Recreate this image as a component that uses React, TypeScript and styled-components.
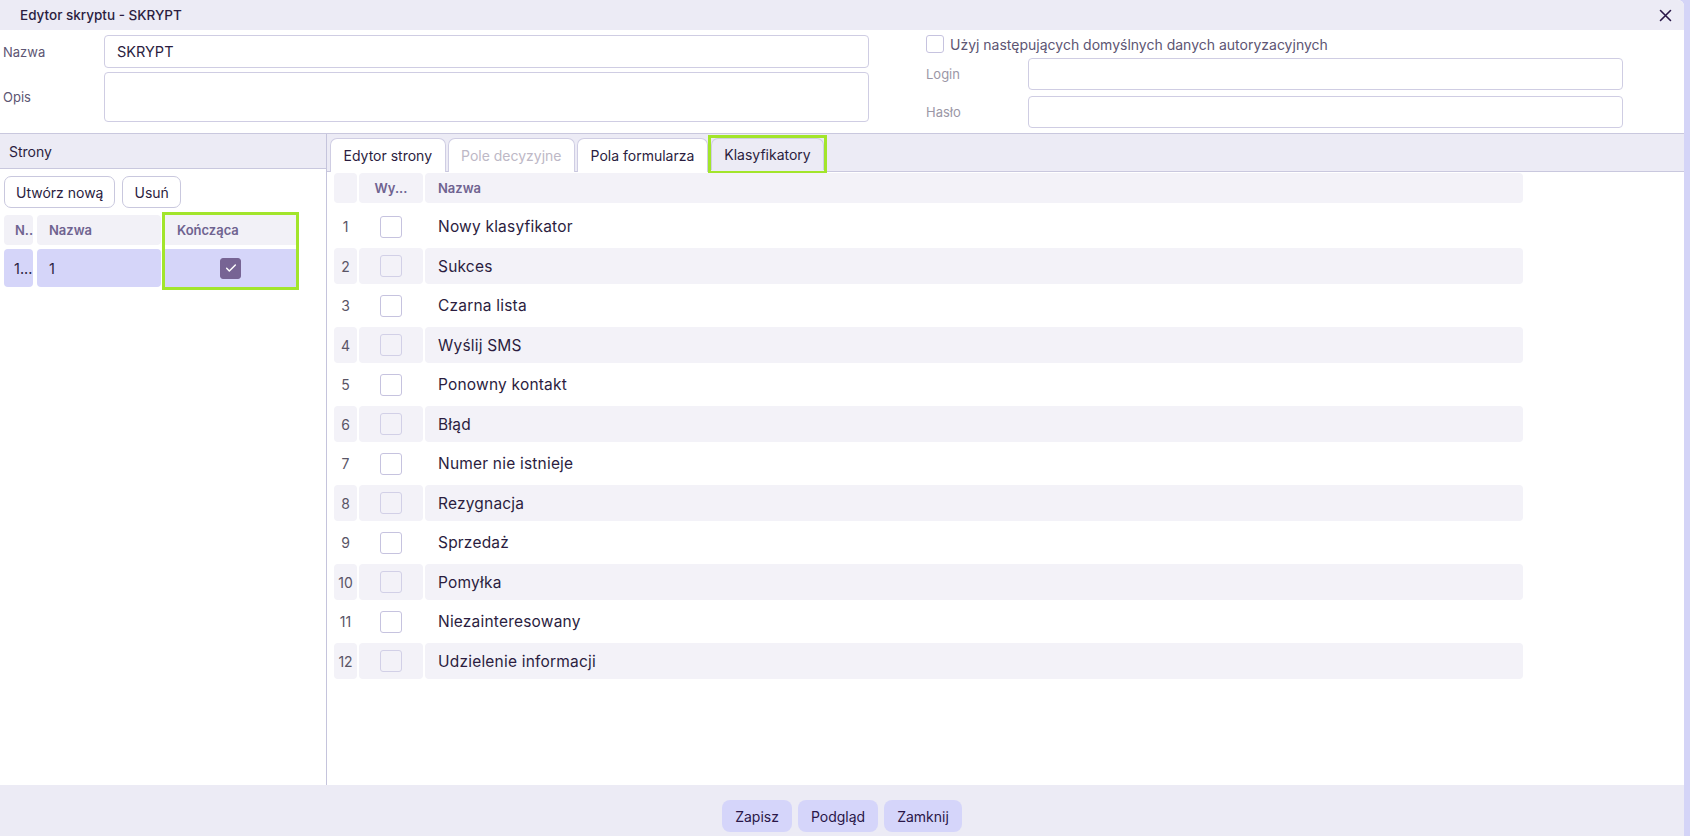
import React from 'react';
import styled, { createGlobalStyle } from 'styled-components';

const GlobalStyle = createGlobalStyle`
  html, body {
    margin: 0;
    padding: 0;
    height: 100%;
  }
  body {
    font-family: Inter, "Noto Sans", sans-serif;
    color: #2b1d40;
    background: #d4d4f7;
  }
  #root {
    height: 100%;
  }
  * {
    box-sizing: border-box;
  }
`;

const Page = styled.div`
  height: 100vh;
  display: flex;
  padding-right: 6px;
  background: #d4d4f7;
`;

const Window = styled.div`
  flex: 1;
  display: flex;
  flex-direction: column;
  min-width: 0;
  background: #fff;
  border-top-right-radius: 6px;
  overflow: hidden;
`;

const TitleBar = styled.div`
  flex: none;
  height: 30px;
  display: flex;
  align-items: center;
  justify-content: space-between;
  padding: 0 12px 0 20px;
  background: #ecebf5;
`;

const Title = styled.span`
  font-size: 13.5px;
  font-weight: 500;
  color: #2b1d40;
`;

const CloseButton = styled.button`
  width: 14px;
  height: 14px;
  padding: 0;
  border: none;
  background: transparent;
  color: #2a1748;
  display: flex;
  align-items: center;
  justify-content: center;
  cursor: pointer;
`;

const TopForm = styled.div`
  flex: none;
  height: 104px;
  display: flex;
  padding: 5px 0 0 3px;
  border-bottom: 1px solid #c9c8de;
`;

const FieldGrid = styled.div<{ $label: number; $input: number; $gap: number }>`
  display: grid;
  grid-template-columns: ${(p) => p.$label}px ${(p) => p.$input}px;
  row-gap: ${(p) => p.$gap}px;
  align-items: center;
  align-content: start;
`;

const FieldLabel = styled.label<{ $muted?: boolean }>`
  font-size: 13px;
  color: ${(p) => (p.$muted ? '#9b97a6' : '#5d5573')};
`;

const TextBox = styled.input<{ $height: number }>`
  height: ${(p) => p.$height}px;
  width: 100%;
  padding: 0 12px;
  border: 1px solid #cfcde3;
  border-radius: 4px;
  font: inherit;
  font-size: 14.5px;
  color: #2b1d40;
  background: #fff;
  outline: none;
`;

const TextArea = styled.textarea`
  height: 50px;
  width: 100%;
  padding: 8px 12px;
  border: 1px solid #cfcde3;
  border-radius: 4px;
  font: inherit;
  resize: none;
  outline: none;
`;

const AuthBlock = styled.div`
  margin-left: 57px;
  display: flex;
  flex-direction: column;
  gap: 5px;
`;

const CheckRow = styled.div`
  display: flex;
  align-items: center;
  gap: 6px;
  font-size: 14px;
  color: #5d5573;
`;

const Box = styled.span<{ $checked?: boolean; $muted?: boolean; $size: number }>`
  flex: none;
  width: ${(p) => p.$size}px;
  height: ${(p) => p.$size}px;
  display: inline-flex;
  align-items: center;
  justify-content: center;
  border-radius: 3px;
  border: 1px solid ${(p) => (p.$checked ? '#776494' : p.$muted ? '#d2d0e7' : '#c6c3df')};
  background: ${(p) => (p.$checked ? '#776494' : p.$muted ? 'transparent' : '#fff')};
  color: #fff;
`;

const Body = styled.div`
  flex: 1;
  min-height: 0;
  display: flex;
`;

const PagesPanel = styled.div`
  flex: none;
  width: 327px;
  border-right: 1px solid #c5c4dc;
  display: flex;
  flex-direction: column;
`;

const PanelHeader = styled.div`
  height: 35px;
  display: flex;
  align-items: center;
  padding-left: 9px;
  font-size: 14px;
  background: #ecebf5;
  border-bottom: 1px solid #c9c8de;
`;

const ButtonRow = styled.div`
  display: flex;
  gap: 7px;
  padding: 7px 0 0 4px;
`;

const OutlineButton = styled.button`
  height: 32px;
  padding: 0 11px;
  border: 1px solid #c9c8de;
  border-radius: 7px;
  background: #fff;
  font: inherit;
  font-size: 14px;
  color: #2b1d40;
`;

const PagesTable = styled.div`
  display: flex;
  gap: 4px;
  padding: 7px 0 0 4px;
`;

const PageColumn = styled.div<{ $width: number; $highlight?: boolean }>`
  width: ${(p) => p.$width}px;
  display: flex;
  flex-direction: column;
  gap: 4px;
  outline: ${(p) => (p.$highlight ? '3.5px solid #a2e52b' : 'none')};
`;

const HeadCell = styled.div<{ $square?: boolean; $center?: boolean; $pad?: number }>`
  height: 30px;
  display: flex;
  align-items: center;
  justify-content: ${(p) => (p.$center ? 'center' : 'flex-start')};
  padding: 0 0 0 ${(p) => (p.$center ? 0 : p.$pad ?? 12)}px;
  border-radius: ${(p) => (p.$square ? 0 : 4)}px;
  background: #f2f1f7;
  font-size: 13px;
  font-weight: 600;
  color: #6f6390;
  white-space: nowrap;
  overflow: hidden;
`;

const PageCell = styled.div<{ $square?: boolean; $center?: boolean; $pad?: number }>`
  height: 38px;
  display: flex;
  align-items: center;
  justify-content: ${(p) => (p.$center ? 'center' : 'flex-start')};
  padding: 0 0 0 ${(p) => (p.$center ? 0 : p.$pad ?? 12)}px;
  border-radius: ${(p) => (p.$square ? 0 : 4)}px;
  background: #d5d5f9;
  font-size: 14.5px;
  white-space: nowrap;
  overflow: hidden;
`;

const EditorPanel = styled.div`
  flex: 1;
  min-width: 0;
  display: flex;
  flex-direction: column;
`;

const TabBar = styled.div`
  flex: none;
  height: 38px;
  display: flex;
  align-items: flex-end;
  gap: 2px;
  padding-left: 3px;
  background: #ecebf5;
  border-bottom: 1px solid #c9c8de;
`;

const Tab = styled.div<{ $disabled?: boolean; $active?: boolean }>`
  height: ${(p) => (p.$active ? 32 : 34)}px;
  margin-bottom: ${(p) => (p.$active ? 1 : -1)}px;
  display: flex;
  align-items: center;
  padding: 0 12.5px;
  border: 1px solid #cfcde3;
  border-bottom: none;
  border-radius: 7px 7px 0 0;
  background: ${(p) => (p.$active ? '#ecebf5' : '#fff')};
  font-size: 14px;
  color: ${(p) => (p.$disabled ? '#bdb8c6' : '#2b1d40')};
  white-space: nowrap;
`;

const Highlight = styled.div`
  margin-left: 1px;
  display: flex;
  outline: 3.5px solid #a2e52b;
`;

const Rows = styled.div`
  display: flex;
  flex-direction: column;
  gap: 3.5px;
  padding: 1px 0 0 7px;
`;

const GridRow = styled.div<{ $head?: boolean }>`
  display: grid;
  grid-template-columns: 23px 64px 1098px;
  column-gap: 2px;
  height: ${(p) => (p.$head ? 30 : 36)}px;
  margin-bottom: ${(p) => (p.$head ? 2 : 0)}px;
`;

const Cell = styled.div<{ $shaded?: boolean; $align: 'center' | 'left'; $head?: boolean }>`
  display: flex;
  align-items: center;
  justify-content: ${(p) => (p.$align === 'center' ? 'center' : 'flex-start')};
  padding-left: ${(p) => (p.$align === 'left' ? 13 : 0)}px;
  border-radius: 4px;
  background: ${(p) => (p.$shaded ? '#f3f2f8' : 'transparent')};
  font-size: ${(p) => (p.$head ? 13 : 15.5)}px;
  font-weight: ${(p) => (p.$head ? 600 : 400)};
  letter-spacing: ${(p) => (p.$head ? 0 : 0.2)}px;
  color: ${(p) => (p.$head ? '#6f6390' : '#2b1d40')};
  white-space: nowrap;
`;

const RowNumber = styled(Cell)`
  font-size: 14px;
  letter-spacing: 0;
  color: #5a5566;
`;

const Footer = styled.div`
  flex: none;
  height: 51px;
  display: flex;
  justify-content: center;
  align-items: flex-start;
  gap: 6px;
  padding-top: 15px;
  background: #ecebf5;
`;

const FooterButton = styled.button`
  height: 32px;
  padding: 0 13px;
  border: none;
  border-radius: 8px;
  background: #d5d5fa;
  font: inherit;
  font-size: 14px;
  color: #2a1748;
`;

const classifiers = [
  'Nowy klasyfikator',
  'Sukces',
  'Czarna lista',
  'Wyślij SMS',
  'Ponowny kontakt',
  'Błąd',
  'Numer nie istnieje',
  'Rezygnacja',
  'Sprzedaż',
  'Pomyłka',
  'Niezainteresowany',
  'Udzielenie informacji',
];

function Check() {
  return (
    <svg width="16" height="16" viewBox="0 0 24 24" fill="none" stroke="currentColor" strokeWidth="2.2" strokeLinecap="round" strokeLinejoin="round">
      <path d="M5.5 12.5l4 4L18.5 7.5" />
    </svg>
  );
}

export default function App() {
  return (
    <>
      <GlobalStyle />
      <Page>
        <Window>
          <TitleBar>
            <Title>Edytor skryptu - SKRYPT</Title>
            <CloseButton aria-label="Zamknij">
              <svg width="13" height="13" viewBox="0 0 13 13" stroke="currentColor" strokeWidth="1.6" strokeLinecap="round">
                <path d="M1.5 1.5l10 10M11.5 1.5l-10 10" />
              </svg>
            </CloseButton>
          </TitleBar>

          <TopForm>
            <FieldGrid $label={101} $input={765} $gap={4}>
              <FieldLabel>Nazwa</FieldLabel>
              <TextBox $height={33} defaultValue="SKRYPT" />
              <FieldLabel>Opis</FieldLabel>
              <TextArea />
            </FieldGrid>
            <AuthBlock>
              <CheckRow>
                <Box $size={18} />
                Użyj następujących domyślnych danych autoryzacyjnych
              </CheckRow>
              <FieldGrid $label={102} $input={595} $gap={6}>
                <FieldLabel $muted>Login</FieldLabel>
                <TextBox $height={32} />
                <FieldLabel $muted>Hasło</FieldLabel>
                <TextBox $height={32} />
              </FieldGrid>
            </AuthBlock>
          </TopForm>

          <Body>
            <PagesPanel>
              <PanelHeader>Strony</PanelHeader>
              <ButtonRow>
                <OutlineButton>Utwórz nową</OutlineButton>
                <OutlineButton>Usuń</OutlineButton>
              </ButtonRow>
              <PagesTable>
                <PageColumn $width={29}>
                  <HeadCell $pad={11}>N..</HeadCell>
                  <PageCell $pad={10}>1...</PageCell>
                </PageColumn>
                <PageColumn $width={124}>
                  <HeadCell>Nazwa</HeadCell>
                  <PageCell>1</PageCell>
                </PageColumn>
                <PageColumn $width={131} $highlight>
                  <HeadCell $square>Kończąca</HeadCell>
                  <PageCell $square $center>
                    <Box $size={21} $checked>
                      <Check />
                    </Box>
                  </PageCell>
                </PageColumn>
              </PagesTable>
            </PagesPanel>

            <EditorPanel>
              <TabBar>
                <Tab>Edytor strony</Tab>
                <Tab $disabled>Pole decyzyjne</Tab>
                <Tab>Pola formularza</Tab>
                <Highlight>
                  <Tab $active>Klasyfikatory</Tab>
                </Highlight>
              </TabBar>
              <Rows>
                <GridRow $head>
                  <Cell $shaded $head $align="center" />
                  <Cell $shaded $head $align="center">Wy...</Cell>
                  <Cell $shaded $head $align="left">Nazwa</Cell>
                </GridRow>
                {classifiers.map((name, i) => {
                  const shaded = i % 2 === 1;
                  return (
                    <GridRow key={name}>
                      <RowNumber $shaded={shaded} $align="center">{i + 1}</RowNumber>
                      <Cell $shaded={shaded} $align="center">
                        <Box $size={22} $muted={shaded} />
                      </Cell>
                      <Cell $shaded={shaded} $align="left">{name}</Cell>
                    </GridRow>
                  );
                })}
              </Rows>
            </EditorPanel>
          </Body>

          <Footer>
            <FooterButton>Zapisz</FooterButton>
            <FooterButton>Podgląd</FooterButton>
            <FooterButton>Zamknij</FooterButton>
          </Footer>
        </Window>
      </Page>
    </>
  );
}
